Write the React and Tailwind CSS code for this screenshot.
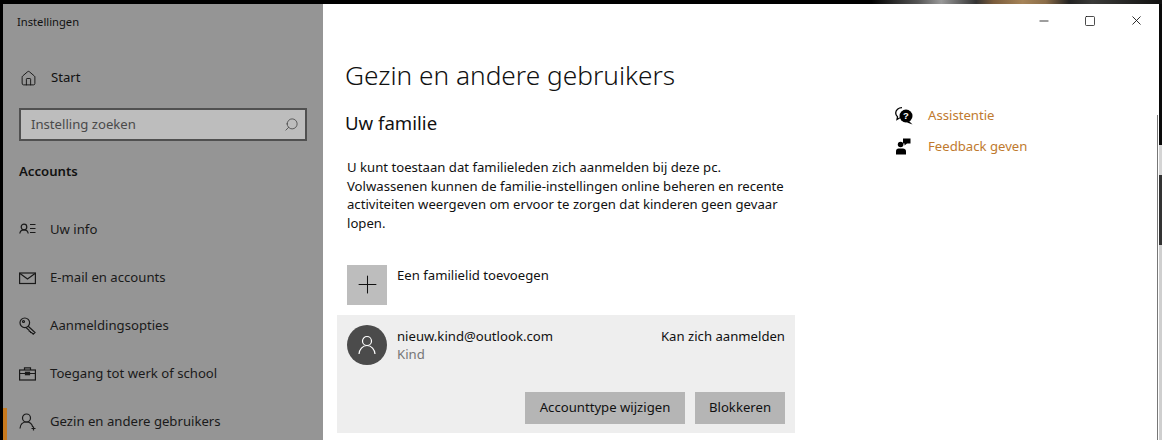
import { Home, Search, Plus, Minus, Square, X } from 'lucide-react'

const NAV_ITEMS = [
  { label: 'Uw info', icon: <UserListIcon /> },
  { label: 'E-mail en accounts', icon: <MailIcon /> },
  { label: 'Aanmeldingsopties', icon: <KeyIcon /> },
  { label: 'Toegang tot werk of school', icon: <CaseIcon /> },
  { label: 'Gezin en andere gebruikers', icon: <UserAddIcon />, active: true },
]

function UserListIcon() {
  return (
    <svg width="17" height="17" viewBox="0 0 17 17" fill="none" stroke="currentColor" strokeWidth="1.2">
      <circle cx="5" cy="5" r="2.800" />
      <path d="M0.800 11.500c0.300-2.500 2-3.700 4.200-3.700s3.900 1.200 4.200 3.700" />
      <path d="M11 2.500h5.500M11 6.500h5.500M11 10.500h5.500" />
    </svg>
  )
}

function MailIcon() {
  return (
    <svg width="17" height="17" viewBox="0 0 17 17" fill="none" stroke="currentColor" strokeWidth="1.2">
      <rect x="0.600" y="3" width="15.800" height="10.500" />
      <path d="M1 3.500l7.500 5.500 7.500-5.500" />
    </svg>
  )
}

function KeyIcon() {
  return (
    <svg width="18" height="18" viewBox="0 0 18 18" fill="none" stroke="currentColor" strokeWidth="1.2">
      <circle cx="5.800" cy="5.800" r="4.800" />
      <circle cx="4.500" cy="4.500" r="1" />
      <path d="M9.200 9.200l6.800 6.300-1.800 1.600-1.600-1.500-1-0.100-0.300-1-1-0.200-0.200-1-3.100-2.800" />
    </svg>
  )
}

function CaseIcon() {
  return (
    <svg width="17" height="17" viewBox="0 0 17 17" fill="none" stroke="currentColor" strokeWidth="1.2">
      <rect x="0.600" y="4" width="15.800" height="10" />
      <path d="M5.500 4V1.800h6V4" />
      <path d="M0.800 7.500h5.200M11 7.500h5.200" />
      <rect x="6.500" y="6.300" width="4" height="2.400" fill="currentColor" />
    </svg>
  )
}

function UserAddIcon() {
  return (
    <svg width="18" height="18" viewBox="0 0 18 18" fill="none" stroke="currentColor" strokeWidth="1.2">
      <circle cx="7.500" cy="5" r="4" />
      <path d="M1 15.500c0.300-4 3-6.500 6.500-6.500s5.500 2 6.200 5" />
      <path d="M14.500 13.500v4M12.500 15.500h4" />
    </svg>
  )
}

function HelpIcon() {
  return (
    <svg width="18" height="18" viewBox="0 0 18 18">
      <path d="M7 0.700C3.400 0.700 0.700 3 0.700 6c0 1.500 0.700 2.800 1.800 3.800L2 12.500l2.900-1.700" fill="none" stroke="#000" strokeWidth="1.300" />
      <circle cx="11" cy="9" r="6.500" fill="#000" />
      <path d="M14 14l3.500 3.500-5.500-2z" fill="#000" />
      <text x="11" y="12.300" textAnchor="middle" fontSize="9.500" fontWeight="700" fill="#fff" fontFamily="Liberation Sans, sans-serif">?</text>
    </svg>
  )
}

function FeedbackIcon() {
  return (
    <svg width="16" height="18" viewBox="0 0 16 18" fill="#000">
      <circle cx="5.600" cy="6.500" r="2.800" />
      <path d="M1 16.500v-3.200C1 11.500 2.200 10.500 3.500 10.500h4.500c1.500 0 3 1 3 2.800v3.200z" />
      <path d="M8 0.500h7.500V5.500H12L9.500 7.500V5.500H8z" />
    </svg>
  )
}

export default function App() {
  return (
    <div className="flex h-[440px] w-[1162px] flex-col overflow-hidden bg-black font-['Noto_Sans',sans-serif]">
      {/* wallpaper sliver above the window */}
      <div className="h-[4px] bg-[linear-gradient(90deg,#000_0,#000_75%,#555_79%,#999_81%,#333_84%,#7a5c3c_85.500%,#a68458_88%,#8a6c48_90%,#222_92%,#3a3a38_94%,#111_100%)]" />
      <div className="flex min-h-0 flex-1 pl-[3px]">
        <aside className="flex w-[320px] shrink-0 flex-col overflow-hidden bg-[#959595] text-[#111]">
          <div className="shrink-0 pl-[14px] pt-[9px] text-[11.200px] leading-[17px]">Instellingen</div>

          <div className="mt-[36px] flex h-[24px] shrink-0 items-center pl-[17px]">
            <Home size={17} strokeWidth={1.3} />
            <span className="ml-[14px] text-[13.150px]">Start</span>
          </div>

          <div className="ml-[16px] mt-[18px] flex h-[33px] w-[288px] shrink-0 items-center justify-between border-2 border-[#505050] bg-[#bdbdbd] pl-[10px] pr-[6px]">
            <span className="text-[13.150px] text-[#4a4a4a]">Instelling zoeken</span>
            <Search size={15} strokeWidth={1.3} className="-scale-x-100 text-[#444]" />
          </div>

          <div className="ml-[16px] mt-[20px] shrink-0 text-[13.150px] leading-[20px] font-semibold">Accounts</div>

          <nav className="mt-[25px] flex shrink-0 flex-col">
            {NAV_ITEMS.map((item) => (
              <div key={item.label} className="relative flex h-[48px] shrink-0 items-center pl-[16px] text-[#1a1a1a]">
                {item.active && <div className="absolute left-0 top-[10px] h-[36px] w-[4px] bg-[#c77a1f]" />}
                <span className="flex w-[31px] shrink-0">{item.icon}</span>
                <span className="text-[13.150px]">{item.label}</span>
              </div>
            ))}
          </nav>
        </aside>

        <main className="relative flex min-w-0 flex-1 flex-col bg-white text-[#111]">
          {/* scrollbar line */}
          <div className="absolute bottom-0 right-[1px] top-[111px] w-[1px] bg-[#777]" />

          <div className="flex h-[32px] items-center justify-end gap-[33px] pr-[15px] pt-[1px]">
            <Minus size={14} strokeWidth={1.4} />
            <Square size={12} strokeWidth={1.5} />
            <X size={15} strokeWidth={1.4} />
          </div>

          <div className="flex flex-1">
            <section className="w-[480px] pl-[14px]">
              <h1 className="ml-[8px] mt-[21px] text-[26.250px] leading-[36px] font-light">Gezin en andere gebruikers</h1>
              <h2 className="ml-[8px] mt-[16px] text-[18.600px] leading-[28px]">Uw familie</h2>
              <p className="ml-[10px] mt-[21px] w-[450px] text-[13.150px] leading-[18.700px]">
                U kunt toestaan dat familieleden zich aanmelden bij deze pc. Volwassenen kunnen de familie-instellingen online beheren en recente activiteiten weergeven om ervoor te zorgen dat kinderen geen gevaar lopen.
              </p>

              <div className="ml-[10px] mt-[32px] flex">
                <div className="flex h-[40px] w-[40px] items-center justify-center bg-[#bdbdbd]">
                  <Plus size={29} strokeWidth={0.85} />
                </div>
                <span className="ml-[10px] text-[13.150px] leading-[20px]">Een familielid toevoegen</span>
              </div>

              <div className="mt-[10px] flex h-[118px] w-[458px] flex-col justify-between bg-[#eeeeee] pb-[9px] pl-[10px] pr-[10px] pt-[10px]">
                <div className="flex">
                  <div className="flex h-[40px] w-[40px] items-center justify-center rounded-full bg-[#4b4b4b] text-white">
                    <svg width="18" height="20" viewBox="0 0 18 20" fill="none" stroke="currentColor" strokeWidth="1.2">
                      <circle cx="9" cy="6" r="4.500" />
                      <path d="M1 19c0.300-4.500 3.500-8.500 8-8.500s7.700 4 8 8.500" />
                    </svg>
                  </div>
                  <div className="ml-[10px] flex-1 pt-[2px]">
                    <div className="flex justify-between text-[13.150px] leading-[18px]">
                      <span>nieuw.kind@outlook.com</span>
                      <span>Kan zich aanmelden</span>
                    </div>
                    <div className="text-[13.150px] leading-[18px] text-[#767676]">Kind</div>
                  </div>
                </div>
                <div className="flex justify-end gap-[10px]">
                  <button className="h-[32px] w-[160px] bg-[#b5b5b5] text-[13.150px]">Accounttype wijzigen</button>
                  <button className="h-[32px] w-[90px] bg-[#b5b5b5] text-[13.150px]">Blokkeren</button>
                </div>
              </div>
            </section>

            <section className="ml-[92px] flex flex-col pt-[64px]">
              <div className="flex h-[31px] items-center">
                <span className="flex w-[33px] shrink-0"><HelpIcon /></span>
                <span className="text-[13.150px] text-[#c07a2e]">Assistentie</span>
              </div>
              <div className="flex h-[31px] items-center">
                <span className="flex w-[33px] shrink-0"><FeedbackIcon /></span>
                <span className="text-[13.150px] text-[#c07a2e]">Feedback geven</span>
              </div>
            </section>
          </div>
        </main>

        {/* sliver of whatever sits behind the window on the right */}
        <div className="flex w-[3px] shrink-0 flex-col">
          <div className="h-[141px] bg-[#0a0a0a]" />
          <div className="h-[30px] bg-[#d4d4d4]" />
          <div className="h-[70px] bg-[#333]" />
          <div className="flex-1 bg-[#cfcfcf]" />
        </div>
      </div>
    </div>
  )
}
